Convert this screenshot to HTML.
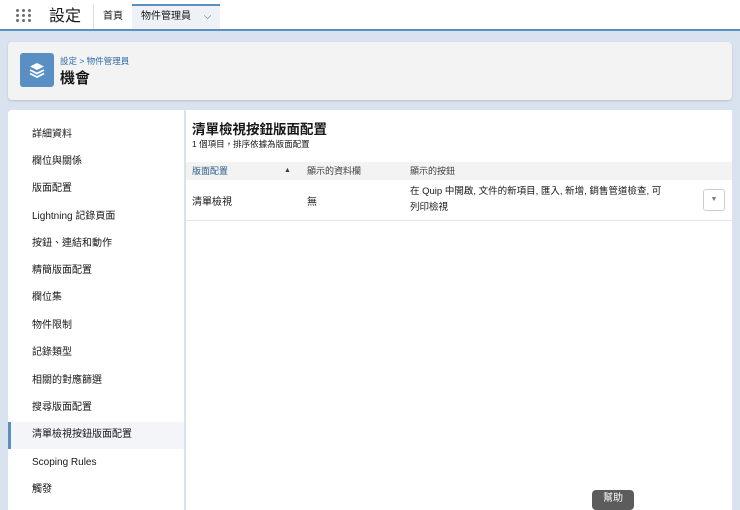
<!DOCTYPE html>
<html><head><meta charset="utf-8"><style>
*{margin:0;padding:0;box-sizing:border-box}
body{width:740px;height:498px;overflow:hidden;background:#d8e3ef;font-family:"Liberation Sans","Noto Sans CJK TC",sans-serif;color:#181818;position:relative}
.top{position:absolute;left:0;top:0;width:740px;height:31px;background:#fff;border-bottom:2px solid #5b8fc2}
.grid{position:absolute;left:16px;top:9px;width:16px;height:14px}
.grid i{position:absolute;width:3px;height:3px;border-radius:50%;background:#706e6b}
.title{position:absolute;left:49px;top:7px;font-size:16px;line-height:20px}
.tab{position:absolute;top:4px;height:25px;font-size:10px;line-height:25px}
.card{position:absolute;left:8px;top:42px;width:724px;height:58px;background:#f3f3f3;border-radius:4px;box-shadow:0 1px 2px rgba(0,0,0,.15)}
.icon{position:absolute;left:12px;top:11px;width:34px;height:34px;background:#5a8fc4;border-radius:3px}
.side{position:absolute;left:8px;top:110px;width:176px;height:400px;background:#fff;border-radius:4px 0 0 0}
.side div{position:absolute;left:24px;font-size:10px;height:14px;line-height:14px}
.main{position:absolute;left:186px;top:110px;width:546px;height:400px;background:#fff}
.help{position:absolute;left:592px;top:490px;width:42px;height:20px;background:#5c5c5c;border-radius:4px;color:#fff;font-size:10px;text-align:center;line-height:18px}
</style></head><body>
<div class="top">
<div class="grid"><i style="left:0;top:0"></i><i style="left:6px;top:0"></i><i style="left:12px;top:0"></i><i style="left:0;top:5px"></i><i style="left:6px;top:5px"></i><i style="left:12px;top:5px"></i><i style="left:0;top:10px"></i><i style="left:6px;top:10px"></i><i style="left:12px;top:10px"></i></div>
<div class="title">設定</div>
<div style="position:absolute;left:93px;top:4px;width:1px;height:25px;background:#ddd"></div>
<div class="tab" style="left:103px">首頁</div>
<div class="tab" style="left:132px;width:88px;background:#eef2f7;border-top:2px solid #5b8fc2;padding-left:9px;line-height:22px">物件管理員 <span style="margin-left:10px;color:#555">⌵</span></div>
</div>
<div class="card">
<div class="icon"><svg width="34" height="34" viewBox="0 0 34 34"><path d="M17 10l7 3.5-7 3.5-7-3.5z" fill="#fff"/><path d="M10 17l7 3.5 7-3.5M10 20.5l7 3.5 7-3.5" stroke="#fff" stroke-width="1.8" fill="none"/></svg></div>
<div style="position:absolute;left:52px;top:13px;font-size:8.5px;color:#2c6aa8">設定 &gt; 物件管理員</div>
<div style="position:absolute;left:52px;top:25px;font-size:15px;font-weight:bold">機會</div>
</div>
<div class="side">
<div style="top:18px">詳細資料</div><div style="top:45px">欄位與關係</div><div style="top:72px">版面配置</div><div style="top:100px">Lightning 記錄頁面</div><div style="top:127px">按鈕、連結和動作</div><div style="top:154px">精簡版面配置</div><div style="top:181px">欄位集</div><div style="top:209px">物件限制</div><div style="top:236px">記錄類型</div><div style="top:264px">相關的對應篩選</div><div style="top:291px">搜尋版面配置</div>
<div style="left:0;top:312px;width:176px;height:27px;background:#f3f5f8;border-left:3px solid #5b8fc2"></div>
<div style="top:318px">清單檢視按鈕版面配置</div><div style="top:346px">Scoping Rules</div><div style="top:373px">觸發</div>
</div>
<div class="main">
<div style="position:absolute;left:6px;top:11px;font-size:13.5px;line-height:17px;font-weight:bold">清單檢視按鈕版面配置</div>
<div style="position:absolute;left:6px;top:29px;font-size:8.5px;line-height:11px">1 個項目，排序依據為版面配置</div>
<div style="position:absolute;left:0;top:52px;width:546px;height:18px;background:#f3f3f3;font-size:9px;line-height:18px;color:#3e3e3c">
<span style="position:absolute;left:6px;color:#2c5b8a">版面配置</span><span style="position:absolute;left:98px;font-size:7px">▲</span><span style="position:absolute;left:121px">顯示的資料欄</span><span style="position:absolute;left:224px">顯示的按鈕</span></div>
<div style="position:absolute;left:0;top:110px;width:546px;height:1px;background:#e5e5e5"></div>
<div style="position:absolute;left:6px;top:83px;font-size:10px">清單檢視</div>
<div style="position:absolute;left:121px;top:83px;font-size:10px">無</div>
<div style="position:absolute;left:224px;top:74px;width:280px;font-size:9.5px;line-height:16px;white-space:nowrap">在 Quip 中開啟, 文件的新項目, 匯入, 新增, 銷售管道檢查, 可<br>列印檢視</div>
<div style="position:absolute;left:517px;top:79px;width:22px;height:22px;border:1px solid #ccc;border-radius:3px;text-align:center;line-height:20px;font-size:7px;color:#777">▼</div>
</div>
<div class="help">幫助</div>
</body></html>
